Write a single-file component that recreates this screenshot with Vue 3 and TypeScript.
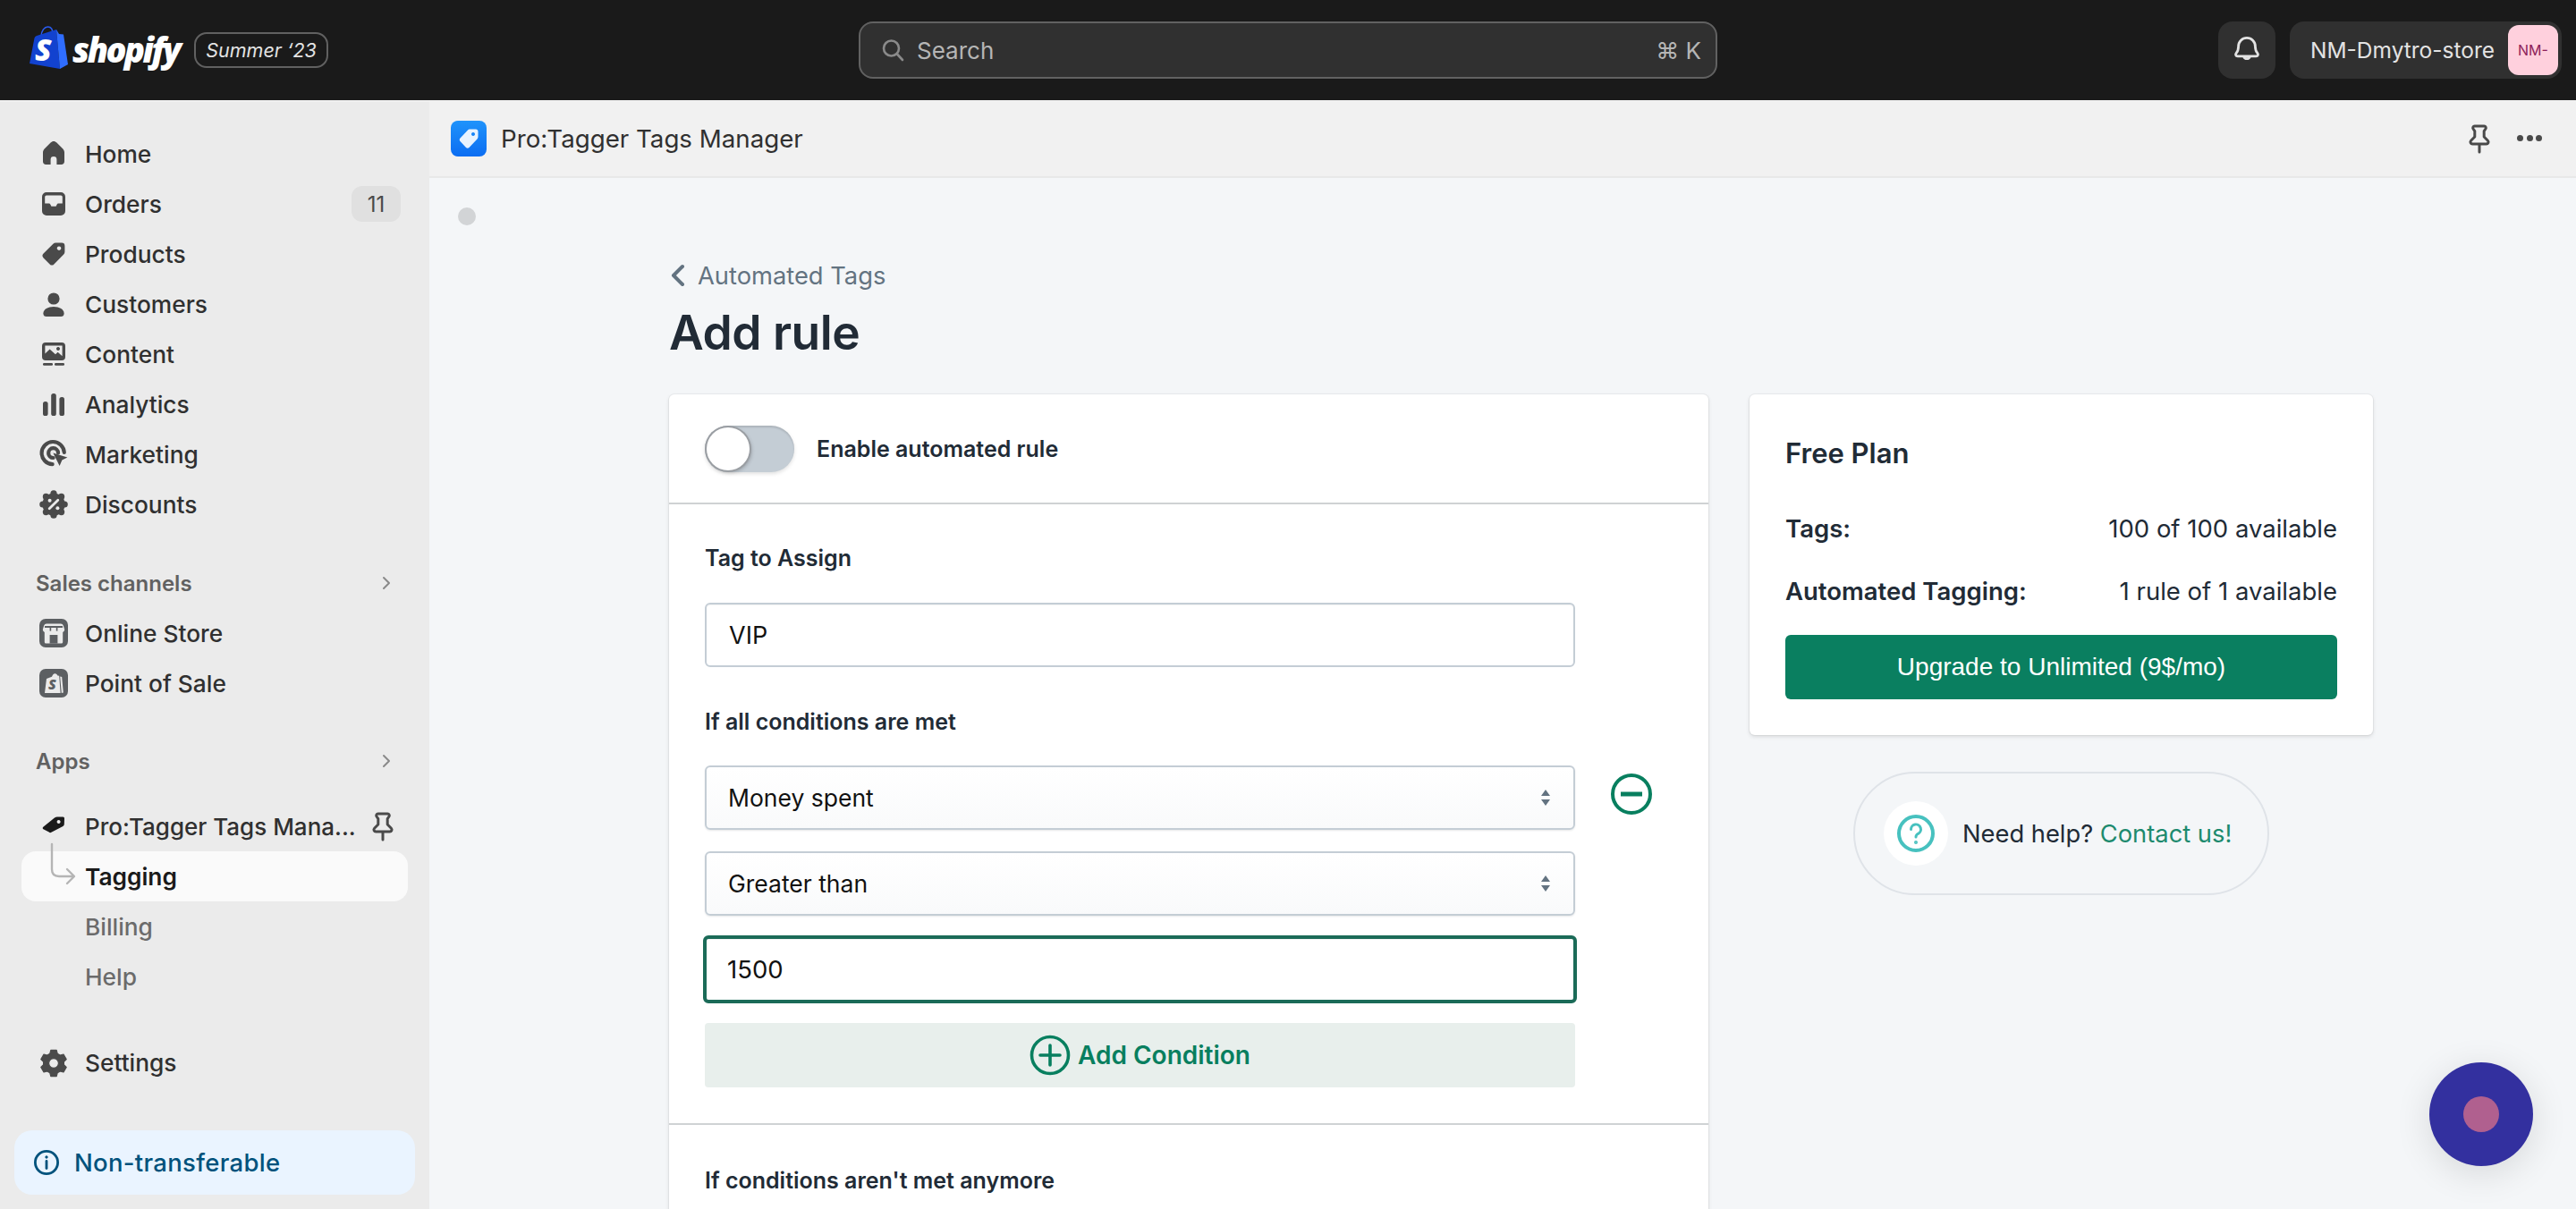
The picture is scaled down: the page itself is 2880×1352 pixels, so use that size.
<script setup lang="ts">
import { ref } from 'vue';

type NavItem = { label: string; icon: string; badge?: string };

const icons: Record<string, string> = {
  home: '<path fill-rule="evenodd" d="M10 3c-.7 0-1.200.3-1.700.8L4.800 7.200C4.300 7.800 4 8.500 4 9.300v5C4 15.300 4.700 16 5.700 16h8.600c1 0 1.700-.7 1.700-1.700v-5c0-.8-.3-1.500-.8-2.100l-3.500-3.400C11.200 3.300 10.700 3 10 3zM8.300 16v-2.800a1.700 1.700 0 0 1 3.400 0V16z"/>',
  orders: '<path fill-rule="evenodd" d="M6 3.500h8a2.500 2.500 0 0 1 2.500 2.500v8a2.500 2.500 0 0 1-2.500 2.500H6A2.500 2.500 0 0 1 3.500 14V6A2.500 2.500 0 0 1 6 3.500zM6 5.200a.9.900 0 0 0-.9.900v3.700h2.100c.5 0 .8.200 1 .6l.5 1h2.600l.5-1c.2-.4.500-.6 1-.6h2.100V6.100a.9.900 0 0 0-.9-.9z"/>',
  products: '<path fill-rule="evenodd" d="M11.200 3.800h3.300A1.700 1.700 0 0 1 16.200 5.500v3.300c0 .6-.2 1.100-.6 1.500l-5.400 5.400a1.700 1.700 0 0 1-2.400 0l-3.500-3.500a1.700 1.700 0 0 1 0-2.400l5.400-5.400c.4-.4.900-.6 1.500-.6zM13 5.700a1.150 1.150 0 1 0 .01 0z"/>',
  customers: '<circle cx="10" cy="7" r="3.300"/><path d="M4.200 15.200c0-2.200 2.600-3.700 5.800-3.700s5.800 1.500 5.800 3.700c0 1.100-.7 1.800-1.700 1.800H5.900c-1 0-1.700-.7-1.700-1.800z"/>',
  content: '<path fill-rule="evenodd" d="M5.500 3.500h9a2 2 0 0 1 2 2v6a2 2 0 0 1-2 2h-9a2 2 0 0 1-2-2v-6a2 2 0 0 1 2-2zM5.200 5.200v4.500l2.600-2.500 3.200 2.900 1.300-1.200 2.500 2.200V5.200zM12.500 6a1 1 0 1 0 .01 0z"/><rect x="4" y="15" width="5.500" height="1.400" rx=".6"/><rect x="10.500" y="15" width="5.500" height="1.400" rx=".6"/>',
  analytics: '<rect x="4" y="8.500" width="2.800" height="8" rx="1.300"/><rect x="8.600" y="4" width="2.800" height="12.500" rx="1.300"/><rect x="13.200" y="6" width="2.800" height="10.500" rx="1.300"/>',
  marketing: '<path fill="none" stroke="currentColor" stroke-width="2.100" stroke-linecap="round" d="M9.300 15.600a6.300 6.300 0 1 1 6.600-6.600M9.800 12a2.700 2.700 0 1 1 2.700-2.800"/><path d="M9.700 9.300l8 2.500-3 1.400-1.400 3.300z"/>',
  discounts: '<circle cx="10" cy="10" r="6.300"/><circle cx="10" cy="3.900" r="1.800"/><circle cx="10" cy="16.100" r="1.800"/><circle cx="3.900" cy="10" r="1.800"/><circle cx="16.100" cy="10" r="1.800"/><circle cx="5.700" cy="5.700" r="1.800"/><circle cx="14.300" cy="5.700" r="1.800"/><circle cx="5.700" cy="14.300" r="1.800"/><circle cx="14.300" cy="14.300" r="1.800"/><path fill="none" stroke="#ebebeb" stroke-width="1.400" stroke-linecap="round" d="M12.400 7.600l-4.800 4.800"/><circle cx="7.800" cy="7.900" r="1" fill="#ebebeb"/><circle cx="12.200" cy="12.100" r="1" fill="#ebebeb"/>',
  settings: '<path fill-rule="evenodd" d="M8.400 3.200h3.200l.5 1.900 1.500.9 1.900-.5 1.600 2.800-1.400 1.400v1.600l1.400 1.400-1.600 2.800-1.900-.5-1.500.9-.5 1.900H8.400l-.5-1.900-1.500-.9-1.900.5-1.600-2.800 1.400-1.400V9.700L2.900 8.300l1.600-2.800 1.900.5 1.500-.9zM10 7.800a2.700 2.700 0 1 0 .01 0z" stroke="currentColor" stroke-width=".6" stroke-linejoin="round"/>',
  store: '<rect x="2" y="2" width="16" height="16" rx="3.500" fill="#5c5f62"/><path fill="#ebebeb" d="M6 4.700h8a1.500 1.500 0 0 1 1.400 1l.7 2.300a1.700 1.700 0 0 1-1 1.500V15a.8.800 0 0 1-.8.8H5.700a.8.800 0 0 1-.8-.8V9.500a1.700 1.700 0 0 1-1-1.500l.7-2.300A1.500 1.500 0 0 1 6 4.700z"/><g fill="#5c5f62"><rect x="5" y="6" width="10" height="1"/><rect x="7.800" y="7" width=".8" height="1.800"/><rect x="11.400" y="7" width=".8" height="1.800"/><rect x="7.800" y="11" width="4.400" height="4.800"/></g>',
  pos: '<rect x="2" y="2" width="16" height="16" rx="3.500" fill="#5c5f62"/><path fill="#ebebeb" d="M5 15.500 6 7.500l3-1.100c.3-1 1-1.800 1.700-1.800.8 0 1.300.6 1.500 1.100l.9.200.7 9.600z"/><path fill="#ebebeb" d="M13.600 6.300l1 .2.800 8.800-1 .2z"/><text x="7" y="13.600" font-family="Open Sans, sans-serif" font-size="8" font-weight="800" font-style="italic" fill="#5c5f62">S</text>',
};

const mainNav: NavItem[] = [
  { label: 'Home', icon: 'home' },
  { label: 'Orders', icon: 'orders', badge: '11' },
  { label: 'Products', icon: 'products' },
  { label: 'Customers', icon: 'customers' },
  { label: 'Content', icon: 'content' },
  { label: 'Analytics', icon: 'analytics' },
  { label: 'Marketing', icon: 'marketing' },
  { label: 'Discounts', icon: 'discounts' },
];

const channels: NavItem[] = [
  { label: 'Online Store', icon: 'store' },
  { label: 'Point of Sale', icon: 'pos' },
];

const tagName = ref('VIP');
const amount = ref('1500');
</script>

<template>
  <div class="admin">
    <header class="topbar">
      <div class="brand">
        <svg class="bag" viewBox="0 0 44 50" width="44" height="50">
          <path d="M14 13C14 6 18 2 21.500 2 25 2 27 5 27 10" fill="none" stroke="#2a5cf0" stroke-width="1.600" />
          <path fill="#1242cf" d="M1 43 6.500 14.500 Q7 12.500 9 12L31 5 35 49Z" />
          <path fill="#2f6dff" d="M31 5 34 10 39 10.500 44 44 35 49Z" />
          <text x="7" y="40" class="bag-s">S</text>
        </svg>
        <span class="wordmark">shopify</span>
        <span class="edition">Summer ‘23</span>
      </div>
      <div class="search">
        <svg width="26" height="26" viewBox="0 0 26 26" fill="none" stroke="#8a8a8a" stroke-width="2.600" stroke-linecap="round">
          <circle cx="11.500" cy="11" r="8.500" />
          <path d="M18 17.500 24 24" />
        </svg>
        <span class="search-text">Search</span>
        <span class="search-key">⌘ K</span>
      </div>
      <div class="top-actions">
        <button class="bell">
          <svg width="40" height="40" viewBox="0 0 20 20" fill="none" stroke="#e3e3e3" stroke-width="1.400" stroke-linejoin="round">
            <path d="M10 3.200A4.700 4.700 0 0 0 5.300 8c0 1.700-.5 2.900-1.300 3.800-.5.600-.2 1.600.8 1.600h10.400c1 0 1.300-1 .8-1.600-.8-.9-1.300-2.100-1.300-3.800A4.700 4.700 0 0 0 10 3.200z" />
            <path d="M8.300 13.600a1.800 1.800 0 0 0 3.400 0" />
          </svg>
        </button>
        <button class="store-btn">
          <span class="store-name">NM-Dmytro-store</span>
          <span class="avatar">NM-</span>
        </button>
      </div>
    </header>

    <div class="body">
      <aside class="sidebar">
        <nav class="nav-main">
          <a v-for="item in mainNav" :key="item.label" class="nav-item">
            <svg class="nav-icon" viewBox="0 0 20 20" v-html="icons[item.icon]" />
            <span class="nav-label">{{ item.label }}</span>
            <span v-if="item.badge" class="badge">{{ item.badge }}</span>
          </a>
        </nav>

        <div class="section-head sales-head">
          <span>Sales channels</span>
          <svg width="20" height="20" viewBox="0 0 20 20" fill="none" stroke="#8a8a8a" stroke-width="2" stroke-linecap="round" stroke-linejoin="round"><path d="M7 4l6 6-6 6" /></svg>
        </div>
        <a v-for="item in channels" :key="item.label" class="nav-item">
          <svg class="nav-icon" viewBox="0 0 20 20" v-html="icons[item.icon]" />
          <span class="nav-label">{{ item.label }}</span>
        </a>

        <div class="section-head apps-head">
          <span>Apps</span>
          <svg width="20" height="20" viewBox="0 0 20 20" fill="none" stroke="#8a8a8a" stroke-width="2" stroke-linecap="round" stroke-linejoin="round"><path d="M7 4l6 6-6 6" /></svg>
        </div>
        <a class="nav-item app-item">
          <svg class="nav-icon" viewBox="0 0 20 20">
            <path fill-rule="evenodd" fill="#1a1a1a" d="M4 10.500l6.500-5.300c.5-.4 1-.5 1.500-.5l3.200.1c.5 0 .8.400.8.900l-.1 3c0 .5-.3 1-.7 1.300l-6.500 3.400c-.5.300-1 .2-1.300-.2L4 11.500c-.2-.3-.2-.7 0-1zM12.800 6.500a1 1 0 1 0 .01 0z" />
          </svg>
          <span class="nav-label app-name">Pro:Tagger Tags Mana...</span>
          <svg class="pin side-pin" viewBox="0 0 20 20" fill="none" stroke="#4a4a4a" stroke-width="1.500" stroke-linecap="round" stroke-linejoin="round">
            <path d="M7.300 3h5.400c.8 0 1.200.9.800 1.500l-.9 1.300V9l2.100 2.100c.7.700.2 1.900-.8 1.900H6.100c-1 0-1.500-1.200-.8-1.900L7.400 9V5.800l-.9-1.300C6.100 3.900 6.500 3 7.300 3zM10 13v4.500" />
          </svg>
        </a>
        <a class="nav-item sub active">
          <svg class="connector" width="30" height="48" viewBox="0 0 30 48" fill="none" stroke="#b5b5b5" stroke-width="2.400" stroke-linecap="round" stroke-linejoin="round">
            <path d="M2 2v28c0 5 3 8 8 8h16M19 30l8 8-8 8" />
          </svg>
          <span class="nav-label">Tagging</span>
        </a>
        <a class="nav-item sub muted"><span class="nav-label">Billing</span></a>
        <a class="nav-item sub muted"><span class="nav-label">Help</span></a>

        <a class="nav-item settings">
          <svg class="nav-icon" viewBox="0 0 20 20" v-html="icons.settings" />
          <span class="nav-label">Settings</span>
        </a>
        <div class="plan-note">
          <svg width="32" height="32" viewBox="0 0 32 32" fill="none" stroke="#00527c" stroke-width="2.800">
            <circle cx="16" cy="16" r="12.600" />
            <path d="M16 14.500v8" stroke-linecap="round" />
            <circle cx="16" cy="10" r="1.200" fill="#00527c" stroke-width="1" />
          </svg>
          <span>Non-transferable</span>
        </div>
      </aside>

      <main class="main">
        <div class="app-bar">
          <span class="app-logo">
            <svg width="24" height="24" viewBox="0 0 24 24"><path fill="#fff" fill-opacity=".9" fill-rule="evenodd" d="M14 1.500h6c1.400 0 2.500 1.100 2.500 2.500v6c0 1-.4 1.800-1 2.500l-9 9.500c-1 1-2.500 1-3.500 0L2.500 15c-1-1-1-2.500 0-3.500l9-9.500c.7-.4 1.600-.5 2.500-.5zM17 5a2 2 0 1 0 .01 0z" /></svg>
          </span>
          <span class="app-title">Pro:Tagger Tags Manager</span>
          <svg class="pin bar-pin" viewBox="0 0 20 20" fill="none" stroke="#4a4a4a" stroke-width="1.500" stroke-linecap="round" stroke-linejoin="round">
            <path d="M7.300 3h5.400c.8 0 1.200.9.800 1.500l-.9 1.300V9l2.100 2.100c.7.700.2 1.900-.8 1.900H6.100c-1 0-1.500-1.200-.8-1.900L7.400 9V5.800l-.9-1.300C6.100 3.900 6.500 3 7.300 3zM10 13v4.500" />
          </svg>
          <span class="dots"><i /><i /><i /></span>
        </div>

        <div class="spinner-dot" />

        <section class="page">
          <a class="back">
            <svg width="18" height="26" viewBox="0 0 18 26" fill="none" stroke="#637381" stroke-width="4" stroke-linecap="round" stroke-linejoin="round"><path d="M14 3 4 13l10 10" /></svg>
            <span>Automated Tags</span>
          </a>
          <h1>Add rule</h1>

          <div class="columns">
            <div class="card rule-card">
              <div class="toggle-row">
                <span class="toggle"><span class="knob" /></span>
                <span class="toggle-label">Enable automated rule</span>
              </div>
              <div class="rule-body">
                <label class="field-label first">Tag to Assign</label>
                <input v-model="tagName" class="text-input" type="text" />
                <label class="field-label conditions">If all conditions are met</label>
                <div class="condition">
                  <div class="condition-fields">
                    <div class="select">
                      <span>Money spent</span>
                      <svg width="14" height="24" viewBox="0 0 14 24" fill="#637381"><path d="M7 3l5 7H2zM7 21l-5-7h10z" /></svg>
                    </div>
                    <div class="select">
                      <span>Greater than</span>
                      <svg width="14" height="24" viewBox="0 0 14 24" fill="#637381"><path d="M7 3l5 7H2zM7 21l-5-7h10z" /></svg>
                    </div>
                    <input v-model="amount" class="text-input focused" type="text" />
                    <button class="add-btn">
                      <svg width="46" height="46" viewBox="0 0 46 46" fill="none" stroke="#087f5f" stroke-width="3.600" stroke-linecap="round">
                        <circle cx="23" cy="23" r="20.500" />
                        <path d="M23 12v22M12 23h22" />
                      </svg>
                      <span>Add Condition</span>
                    </button>
                  </div>
                  <svg class="remove" width="48" height="48" viewBox="0 0 48 48" fill="none" stroke="#087f5f" stroke-width="4">
                    <circle cx="24" cy="24" r="21" />
                    <path d="M12 24h24" stroke-width="5" />
                  </svg>
                </div>
              </div>
              <div class="rule-footer">
                <label class="field-label">If conditions aren't met anymore</label>
              </div>
            </div>

            <div class="side">
              <div class="card plan-card">
                <h2>Free Plan</h2>
                <div class="plan-row"><b>Tags:</b><span>100 of 100 available</span></div>
                <div class="plan-row"><b>Automated Tagging:</b><span>1 rule of 1 available</span></div>
                <button class="upgrade">Upgrade to Unlimited (9$/mo)</button>
              </div>
              <div class="help">
                <span class="help-icon">
                  <svg width="44" height="44" viewBox="0 0 44 44" fill="none" stroke="#47c1bf" stroke-width="4" stroke-linecap="round">
                    <circle cx="22" cy="22" r="19" />
                    <path d="M16.500 17.500a5.500 5.500 0 1 1 8 4.800c-1.600.9-2.500 1.800-2.500 3.700" stroke-width="3" />
                    <circle cx="22" cy="32" r=".8" stroke-width="2.400" />
                  </svg>
                </span>
                <span class="help-text">Need help? <a>Contact us!</a></span>
              </div>
            </div>
          </div>
        </section>

        <div class="chat-bubble"><span /></div>
      </main>
    </div>
  </div>
</template>

<style scoped>
.admin {
  height: 1352px;
  overflow: hidden;
  font-family: Inter, "Noto Sans", sans-serif;
  display: flex;
  flex-direction: column;
  color: #303030;
}

/* top bar */
.topbar {
  height: 112px;
  flex: none;
  background: #1a1a1a;
  display: flex;
  align-items: center;
  justify-content: space-between;
  padding: 0 16px 0 32px;
}
.brand {
  width: 928px;
  display: flex;
  align-items: center;
}
.bag { flex: none; margin-top: -6px; }
.bag-s {
  font-family: "Open Sans", sans-serif;
  font-weight: 800;
  font-style: italic;
  font-size: 34px;
  fill: #fff;
}
.wordmark {
  font-family: "Open Sans", sans-serif;
  font-weight: 800;
  font-style: italic;
  font-size: 38px;
  letter-spacing: -2.600px;
  color: #fff;
  margin-left: 5px;
  line-height: 1;
  margin-top: -2px;
}
.edition {
  margin-left: 17px;
  height: 40px;
  padding: 0 11px;
  box-sizing: border-box;
  display: flex;
  align-items: center;
  border: 2px solid #616161;
  border-radius: 14px;
  font-size: 21.500px;
  font-style: italic;
  color: #e3e3e3;
  white-space: nowrap;
}
.search {
  width: 960px;
  height: 64px;
  box-sizing: border-box;
  flex: none;
  display: flex;
  align-items: center;
  padding: 0 16px 0 23px;
  background: #303030;
  border: 2px solid #616161;
  border-radius: 16px;
  font-size: 26px;
  color: #b5b5b5;
}
.search-text { margin-left: 14px; }
.search-key { margin-left: auto; }
.top-actions {
  width: 944px;
  display: flex;
  justify-content: flex-end;
  gap: 16px;
}
.bell, .store-btn {
  height: 64px;
  border: none;
  padding: 0;
  background: #303030;
  border-radius: 16px;
  display: flex;
  align-items: center;
  font-family: inherit;
}
.bell { width: 64px; justify-content: center; }
.store-btn { width: 304px; }
.store-name {
  margin-left: 23px;
  font-size: 24.500px;
  color: #e3e3e3;
  white-space: nowrap;
}
.avatar {
  margin-left: auto;
  margin-right: 4px;
  width: 56px;
  height: 56px;
  border-radius: 12px;
  background: #ffd0dd;
  color: #8e1f5a;
  font-size: 16px;
  display: flex;
  align-items: center;
  justify-content: center;
}

.body {
  flex: 1;
  display: flex;
  min-height: 0;
}

/* sidebar */
.sidebar {
  width: 480px;
  flex: none;
  box-sizing: border-box;
  background: #ebebeb;
  padding-top: 32px;
  display: flex;
  flex-direction: column;
  border-top: 2px solid #f0f0f0;
}
.nav-main { display: flex; flex-direction: column; margin-top: -2px; }
.nav-item {
  height: 56px;
  flex: none;
  margin: 0 24px;
  padding: 0 8px 0 16px;
  display: flex;
  align-items: center;
  position: relative;
  border-radius: 16px;
}
.nav-icon {
  width: 40px;
  height: 40px;
  flex: none;
  fill: #4a4a4a;
  color: #4a4a4a;
}
.nav-label {
  margin-left: 15px;
  font-size: 26.300px;
  font-weight: 450;
  color: #303030;
  white-space: nowrap;
}
.app-name { font-size: 26px; }
.badge {
  margin-left: auto;
  width: 55px;
  height: 40px;
  background: #e0e0e0;
  border-radius: 12px;
  display: flex;
  align-items: center;
  justify-content: center;
  font-size: 24px;
  color: #4a4a4a;
}
.section-head {
  height: 56px;
  flex: none;
  margin-left: 40px;
  margin-right: 38px;
  display: flex;
  align-items: center;
  justify-content: space-between;
  font-size: 24px;
  font-weight: 600;
  color: #616161;
}
.sales-head { margin-top: 32px; }
.apps-head { margin-top: 31px; }
.app-item { margin-top: 17px; }
.pin { width: 40px; height: 40px; flex: none; }
.side-pin { margin-left: auto; }
.sub { padding-left: 71px; }
.sub .nav-label { margin-left: 0; }
.active { background: #fafafa; }
.active .nav-label { font-weight: 600; color: #1a1a1a; }
.muted .nav-label { color: #6b6b6b; }
.connector {
  position: absolute;
  left: 32px;
  top: -10px;
}
.settings { margin-top: 40px; }
.plan-note {
  margin: 48px 16px 0;
  height: 72px;
  flex: none;
  background: #eaf4ff;
  border-radius: 20px;
  display: flex;
  align-items: center;
  padding-left: 20px;
  gap: 15px;
  color: #00527c;
  font-size: 27.500px;
  font-weight: 500;
  letter-spacing: .3px;
}

/* main */
.main {
  flex: 1;
  min-width: 0;
  background: #f4f6f8;
  position: relative;
  overflow: hidden;
}
.app-bar {
  height: 87px;
  box-sizing: border-box;
  background: #f1f1f1;
  border-bottom: 2px solid #e8e8e8;
  display: flex;
  align-items: center;
  padding: 0 38px 0 24px;
}
.app-logo {
  width: 40px;
  height: 40px;
  border-radius: 8px;
  background: linear-gradient(180deg, #1f93fb, #0b6df2);
  display: flex;
  align-items: center;
  justify-content: center;
}
.app-title {
  margin-left: 16px;
  font-size: 27.700px;
  color: #303030;
}
.bar-pin { margin-left: auto; }
.dots {
  margin-left: 22px;
  width: 28px;
  display: flex;
  justify-content: space-between;
}
.dots i {
  width: 7px;
  height: 7px;
  border-radius: 50%;
  background: #4a4a4a;
}
.spinner-dot {
  width: 20px;
  height: 20px;
  border-radius: 50%;
  background: #d2d4d6;
  margin: 33px 0 0 32px;
}
.page {
  margin: 36px 0 0 268px;
  width: 1905px;
}
.back {
  display: flex;
  align-items: center;
  gap: 13px;
  height: 40px;
  color: #637381;
  font-size: 27.300px;
  margin-left: 1px;
}
h1 {
  margin: 12px 0 0;
  font-size: 53.300px;
  line-height: 64px;
  font-weight: 600;
  color: #212b36;
  letter-spacing: -.5px;
}
.columns {
  margin-top: 37px;
  display: flex;
  gap: 46px;
  align-items: flex-start;
}
.card {
  background: #fff;
  border-radius: 6px;
  box-shadow: 0 0 0 1px rgba(63, 63, 68, .05), 0 2px 4px rgba(63, 63, 68, .15);
}
.rule-card { width: 1162px; flex: none; }
.toggle-row {
  height: 123px;
  box-sizing: border-box;
  display: flex;
  align-items: center;
  padding-left: 40px;
  gap: 25px;
  border-bottom: 2px solid #cfd2d4;
}
.toggle {
  width: 100px;
  height: 52px;
  border-radius: 26px;
  background: #c4cdd5;
  box-shadow: inset 0 2px 2px rgba(0, 0, 0, .12), 0 2px 4px rgba(0, 0, 0, .12);
  display: flex;
  align-items: center;
  padding-left: 2px;
  box-sizing: border-box;
}
.knob {
  width: 48px;
  height: 48px;
  border-radius: 50%;
  background: #fff;
  box-shadow: 0 0 0 2px #9a9ea3, 2px 2px 4px rgba(0, 0, 0, .25);
}
.toggle-label, .field-label {
  font-size: 25px;
  font-weight: 600;
  color: #212b36;
}
.rule-body {
  padding: 0 40px;
  height: 694px;
  box-sizing: border-box;
  border-bottom: 2px solid #cfd2d4;
}
.field-label { display: block; line-height: 32px; }
.first { padding-top: 44px; margin-bottom: 34px; line-height: 32px; }
.text-input {
  display: block;
  box-sizing: border-box;
  width: 973px;
  height: 72px;
  border: 2px solid #c4cdd5;
  border-radius: 6px;
  background: #fff;
  font: inherit;
  font-size: 27px;
  color: #111;
  padding: 0 25px;
  outline: none;
  box-shadow: inset 0 1px 1px rgba(0, 0, 0, .05);
}
.conditions { margin-top: 45px; margin-bottom: 33px; }
.condition { display: flex; align-items: flex-start; }
.condition-fields {
  width: 973px;
  display: flex;
  flex-direction: column;
}
.select {
  box-sizing: border-box;
  height: 72px;
  margin-bottom: 24px;
  padding: 0 24px 0 24px;
  display: flex;
  align-items: center;
  justify-content: space-between;
  border: 2px solid #c4cdd5;
  border-radius: 6px;
  background: linear-gradient(180deg, #fff, #f9fafb);
  box-shadow: 0 1px 2px rgba(22, 29, 37, .1);
  font-size: 26.500px;
  color: #111;
}
.focused {
  width: 977px;
  height: 76px;
  margin: -2px -2px 0;
  border: 4px solid #1b6b58;
  padding: 0 23px;
  font-size: 27.500px;
}
.add-btn {
  margin-top: 22px;
  height: 72px;
  border: none;
  border-radius: 4px;
  background: #e8efec;
  color: #087f5f;
  font: inherit;
  font-size: 28px;
  font-weight: 600;
  display: flex;
  align-items: center;
  justify-content: center;
  gap: 8px;
}
.remove { margin: 8px 0 0 39px; }
.rule-footer { padding: 46px 40px 0; height: 120px; }

/* right column */
.side { width: 697px; flex: none; display: flex; flex-direction: column; align-items: center; }
.plan-card {
  width: 100%;
  height: 381px;
  box-sizing: border-box;
  padding: 40px;
}
h2 {
  margin: 0;
  font-size: 31px;
  line-height: 52px;
  font-weight: 600;
  color: #212b36;
}
.plan-row {
  display: flex;
  justify-content: space-between;
  align-items: center;
  height: 40px;
  font-size: 27.500px;
  color: #212b36;
}
.plan-row:first-of-type { margin-top: 38px; }
.plan-row b { font-weight: 600; }
.plan-row + .plan-row { margin-top: 30px; }
.upgrade {
  margin-top: 29px;
  width: 100%;
  height: 72px;
  border: none;
  border-radius: 6px;
  background: #0a7f60;
  color: #fff;
  font-family: "Liberation Sans", Arial, sans-serif;
  font-size: 28px;
}
.help {
  margin-top: 41px;
  width: 465px;
  height: 138px;
  box-sizing: border-box;
  border: 2px solid #dfe3e8;
  border-radius: 69px;
  display: flex;
  align-items: center;
  padding-left: 32px;
  gap: 16px;
}
.help-icon {
  width: 72px;
  height: 72px;
  border-radius: 50%;
  background: #fff;
  display: flex;
  align-items: center;
  justify-content: center;
}
.help-text { font-size: 27.300px; color: #212b36; white-space: nowrap; }
.help-text a { color: #1d8a6e; }

.chat-bubble {
  position: absolute;
  left: 2236px;
  top: 1076px;
  width: 116px;
  height: 116px;
  border-radius: 50%;
  background: #33309f;
  box-shadow: 0 8px 40px rgba(0, 0, 0, .12);
  display: flex;
  align-items: center;
  justify-content: center;
}
.chat-bubble span {
  width: 40px;
  height: 40px;
  border-radius: 50%;
  background: #b0608f;
}
</style>
